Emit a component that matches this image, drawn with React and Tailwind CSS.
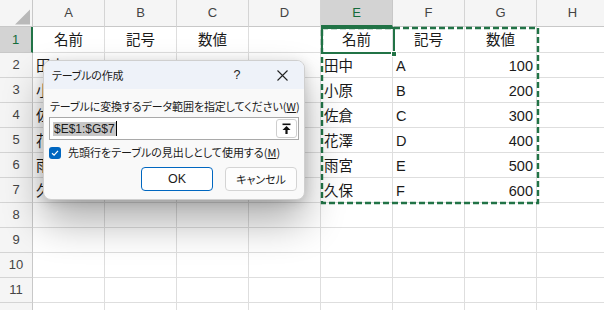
import React from "react";

const COLS = ["A", "B", "C", "D", "E", "F", "G", "H"];
const names = ["田中", "小原", "佐倉", "花澤", "雨宮", "久保"];
const codes = ["A", "B", "C", "D", "E", "F"];
const nums = ["100", "200", "300", "400", "500", "600"];

function cellContent(r, c) {
  const block = (base) => {
    const off = c - base;
    if (r === 1) return { t: ["名前", "記号", "数値"][off], a: "center" };
    if (r >= 2 && r <= 7) {
      const i = r - 2;
      if (off === 0) return { t: names[i], a: "left" };
      if (off === 1) return { t: codes[i], a: "left" };
      if (off === 2) return { t: nums[i], a: "right" };
    }
    return null;
  };
  if (c >= 0 && c <= 2) return block(0);
  if (c >= 4 && c <= 6) return block(4);
  return null;
}

export default function App() {
  const rows = Array.from({ length: 12 }, (_, i) => i + 1);
  return (
    <div className="relative w-[604px] h-[310px] overflow-hidden bg-white font-['Liberation_Sans','Noto_Sans_CJK_JP',sans-serif] text-[#1a1a1a]">
      <div className="grid grid-cols-[33px_repeat(8,72px)] grid-rows-[27px_26px_repeat(11,25px)]">
        <div className="relative bg-[#f5f5f5] border-r border-b border-[#c8c8c8]">
          <svg className="absolute left-0 top-0" width="33" height="27" viewBox="0 0 33 27">
            <polygon points="15,24.5 30,24.5 30,9.5" fill="#b9b9b9" />
          </svg>
        </div>
        {COLS.map((l) => (
          <div
            key={l}
            className={
              l === "E"
                ? "flex items-center justify-center bg-[#d3d3d3] border-r border-[#c8c8c8] border-b-2 border-b-[#217346] text-[13px] text-[#146c3b]"
                : "flex items-center justify-center bg-[#f5f5f5] border-r border-b border-[#d4d4d4] border-b-[#c8c8c8] text-[13px] text-[#444]"
            }
          >
            {l}
          </div>
        ))}
        {rows.map((r) => (
          <React.Fragment key={r}>
            <div
              className={
                r === 1
                  ? "flex items-center justify-center bg-[#d3d3d3] border-b border-[#c8c8c8] border-r-2 border-r-[#217346] text-[13px] text-[#146c3b]"
                  : "flex items-center justify-center bg-[#f5f5f5] border-b border-r border-[#d4d4d4] border-r-[#c8c8c8] text-[13px] text-[#444]"
              }
            >
              {r}
            </div>
            {COLS.map((l, c) => {
              const v = cellContent(r, c);
              const align = v
                ? v.a === "center"
                  ? "justify-center"
                  : v.a === "right"
                  ? "justify-end"
                  : "justify-start"
                : "";
              return (
                <div
                  key={l}
                  className={`flex items-center pt-[2px] px-[3px] border-r border-b border-[#dedede] text-[14.5px] leading-none whitespace-nowrap overflow-hidden ${align}`}
                >
                  {v ? v.t : null}
                </div>
              );
            })}
          </React.Fragment>
        ))}
      </div>

      {/* active cell E1 */}
      <div className="absolute left-[321px] top-[27px] w-[74px] h-[27px] border-2 border-[#217346]" />
      <div className="absolute left-[391px] top-[51px] w-[6px] h-[6px] bg-[#217346] border border-white" />

      {/* marching ants */}
      <svg className="absolute left-[320px] top-[26px]" width="220" height="179" viewBox="0 0 220 179">
        <rect x="2" y="2" width="216" height="175" fill="none" stroke="#217346" strokeWidth="2.4" strokeDasharray="6 3" />
      </svg>

      {/* dialog */}
      <div className="absolute left-[43px] top-[60px] w-[262px] h-[140px] rounded-[8px] border border-[#cfcfcf] bg-[#f9f9f9] overflow-hidden shadow-[0_22px_40px_rgba(0,0,0,0.32),0_2px_12px_rgba(0,0,0,0.14)] font-['Noto_Sans_CJK_JP',sans-serif] [font-feature-settings:'palt'] text-[11px] text-[#1b1b1b]">
        <div className="h-[28px] bg-[#eef2f9] flex items-center pl-[8px]">
          <span className="text-[11px] tracking-[-0.2px]">テーブルの作成</span>
          <span className="ml-auto w-[12px] text-center font-['Liberation_Sans',sans-serif] text-[12.5px]">?</span>
          <svg className="ml-[34px] mr-[16px]" width="11" height="11" viewBox="0 0 11 11">
            <path d="M0.5 0.5 L10.5 10.5 M10.5 0.5 L0.5 10.5" stroke="#222" strokeWidth="1.1" />
          </svg>
        </div>
        <div className="px-[5px]">
          <div className="mt-[9px] h-[16px] flex items-center pl-[1px] whitespace-nowrap tracking-[-0.1px]">
            テーブルに変換するデータ範囲を指定してください(<span className="underline">W</span>)
          </div>
          <div className="mt-[3px] h-[23px] bg-white border border-[#a9a9a9] flex items-center pl-[3px] pr-[1px]">
            <span className="bg-[#c7c7c7] font-['Liberation_Sans',sans-serif] text-[12px] leading-[14px] px-[1px]">$E$1:$G$7</span>
            <span className="w-[1px] h-[15px] bg-black" />
            <div className="ml-auto w-[21px] h-[19px] rounded-[3px] border border-[#cfcfcf] bg-white flex items-center justify-center">
              <svg width="9" height="12" viewBox="0 0 9 12">
                <rect x="0.5" y="0.5" width="8" height="1.6" fill="#111" />
                <polygon points="4.5,3 0.5,7 8.5,7" fill="#111" />
                <rect x="3.4" y="6.5" width="2.2" height="4.5" fill="#111" />
              </svg>
            </div>
          </div>
          <div className="mt-[6px] h-[13px] flex items-center whitespace-nowrap">
            <div className="w-[12px] h-[12px] rounded-[3px] bg-[#0067c0] flex items-center justify-center">
              <svg width="8" height="8" viewBox="0 0 8 8">
                <path d="M1 4.2 L3.1 6.2 L7 1.8" fill="none" stroke="white" strokeWidth="1.2" />
              </svg>
            </div>
            <span className="ml-[7px]">
              先頭行をテーブルの見出しとして使用する(<span className="underline">M</span>)
            </span>
          </div>
          <div className="mt-[8px] flex justify-end gap-[12px] pr-[2px]">
            <div className="w-[72px] h-[24px] rounded-[4px] bg-white border border-[#0067c0] flex items-center justify-center font-['Liberation_Sans',sans-serif] text-[12.5px]">
              OK
            </div>
            <div className="w-[72px] h-[24px] rounded-[4px] bg-[#fdfdfd] border border-[#d4d4d4] flex items-center justify-center">
              キャンセル
            </div>
          </div>
        </div>
      </div>
    </div>
  );
}
